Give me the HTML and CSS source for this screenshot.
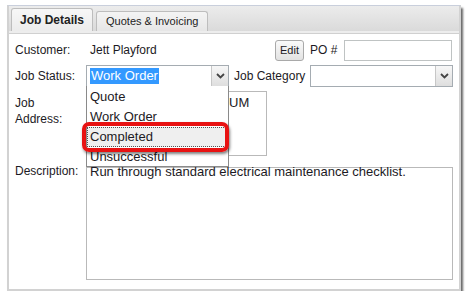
FILE: index.html
```html
<!DOCTYPE html>
<html>
<head>
<meta charset="utf-8">
<link rel="stylesheet" href="styles.css">
</head>
<body>
<div class="panel">
  <div class="tabs">
    <div class="tab active">Job Details</div>
    <div class="tab">Quotes &amp; Invoicing</div>
  </div>
  <div class="content">
    <div class="row row-customer">
      <div class="label">Customer:</div>
      <div class="value">Jett Playford</div>
      <div class="spacer"></div>
      <div class="btn">Edit</div>
      <div class="po-label">PO #</div>
      <div class="input po-input"></div>
    </div>
    <div class="row row-status">
      <div class="label">Job Status:</div>
      <div class="select status-select">
        <div class="select-text"><span class="sel-hl">Work Order</span></div>
        <div class="select-arrow"><svg width="9" height="6" viewBox="0 0 9 6"><path d="M1 1 L4.5 4.5 L8 1" fill="none" stroke="#444" stroke-width="1.8"/></svg></div>
      </div>
      <div class="cat-label">Job Category</div>
      <div class="select cat-select">
        <div class="select-text"></div>
        <div class="select-arrow"><svg width="9" height="6" viewBox="0 0 9 6"><path d="M1 1 L4.5 4.5 L8 1" fill="none" stroke="#444" stroke-width="1.8"/></svg></div>
      </div>
    </div>
    <div class="row row-address">
      <div class="label">Job<br>Address:</div>
      <div class="textarea address-area">UM</div>
    </div>
    <div class="row row-desc">
      <div class="label">Description:</div>
      <div class="textarea desc-area"><span class="desc-text">Run through standard electrical maintenance checklist.</span></div>
    </div>
  </div>
  <div class="dropdown">
    <div class="opt">Quote</div>
    <div class="opt">Work Order</div>
    <div class="opt opt-focus">Completed</div>
    <div class="opt">Unsuccessful</div>
  </div>
  <div class="callout"></div>
</div>
</body>
</html>
```

FILE: styles.css
```css
html, body {
  margin: 0;
  padding: 0;
  background: #ffffff;
}
body {
  font-family: "Liberation Sans", Arial, sans-serif;
  font-size: 12px;
  color: #1c1a24;
}
.panel {
  position: relative;
  margin: 5px 0 0 7px;
  width: 450px;
  height: 283px;
  border: 2px solid #d2d2d2;
  border-top: 1px solid #c9cfdc;
  background: #ffffff;
  box-shadow: 2px 3px 2px rgba(0, 0, 0, 0.6);
}
.tabs {
  height: 23px;
  padding: 2px 0 0 2px;
  display: flex;
  align-items: flex-end;
  gap: 3px;
  background: linear-gradient(#ececec, #dadada);
  border-bottom: 2px solid #ededed;
  box-shadow: 0 1px 0 #d0d0d0;
}
.tab {
  font-size: 11px;
  height: 20px;
  line-height: 19px;
  padding: 0 9px;
  border: 1px solid #bdbdbd;
  border-bottom: none;
  border-radius: 3px 3px 0 0;
  background: linear-gradient(#f4f4f4, #e6e6e6);
  color: #222;
  box-sizing: border-box;
}
.tab.active {
  height: 23px;
  line-height: 22px;
  font-weight: bold;
  font-size: 12px;
  padding: 0 8px;
  background: linear-gradient(#f7f7f7, #ececec);
}
.content {
  padding: 6px 0 0 6px;
  display: flex;
  flex-direction: column;
}
.row {
  display: flex;
  align-items: center;
}
.label {
  width: 71px;
  flex: none;
}
.row-customer {
  height: 22px;
}
.value {
  padding-left: 4px;
}
.spacer {
  flex: 1;
}
.btn {
  width: 29px;
  height: 21px;
  box-sizing: border-box;
  border: 1px solid #a9a9a9;
  border-radius: 3px;
  background: linear-gradient(#fafafa, #e2e2e2);
  font-size: 11px;
  line-height: 19px;
  text-align: center;
}
.po-label {
  margin-left: 6px;
  width: 34px;
}
.input {
  height: 21px;
  box-sizing: border-box;
  border: 1px solid #bfc3c3;
  background: #fff;
}
.po-input {
  width: 108px;
  margin-right: 7px;
}
.row-status {
  margin-top: 4px;
  height: 22px;
}
.select {
  display: flex;
  height: 22px;
  box-sizing: border-box;
  border: 1px solid #a5acb2;
  background: #fff;
}
.status-select {
  width: 143px;
}
.cat-select {
  width: 143px;
  margin-left: auto;
  margin-right: 6px;
}
.select-text {
  flex: 1;
  padding: 2px 0 0 3px;
}
.sel-hl {
  display: inline-block;
  background: #3399ff;
  color: #fff;
  font-size: 13px;
  line-height: 16px;
  padding: 0 1px;
}
.select-arrow {
  width: 16px;
  border-left: 1px solid #c7c7c7;
  background: linear-gradient(#f7f7f7, #dedede);
  display: flex;
  align-items: center;
  justify-content: center;
}
.cat-label {
  margin-left: 5px;
}
.row-address {
  margin-top: 4px;
  align-items: flex-start;
}
.row-address .label {
  padding-top: 4px;
  line-height: 16px;
}
.textarea {
  box-sizing: border-box;
  border: 1px solid #b9b9b9;
  background: #fff;
  padding: 5px 3px;
  font-size: 13px;
}
.address-area {
  width: 181px;
  height: 65px;
  padding-left: 142px;
  padding-top: 3px;
}
.row-desc {
  margin-top: 11px;
  align-items: flex-start;
}
.row-desc .label {
  margin-top: -3px;
  line-height: 15px;
}
.desc-area {
  width: 367px;
  height: 113px;
  padding: 0 3px;
  line-height: 15px;
}
.desc-text {
  display: block;
  margin-top: -4px;
}
.dropdown {
  position: absolute;
  left: 77px;
  top: 80px;
  width: 143px;
  height: 81px;
  box-sizing: border-box;
  border: 1px solid #8a8a8a;
  border-top: none;
  background: #fff;
  padding-top: 1px;
  font-size: 13px;
}
.opt {
  height: 20px;
  line-height: 20px;
  padding-left: 3px;
  box-sizing: border-box;
}
.opt-focus {
  background: #efefef;
  border: 1px dotted #555;
  line-height: 18px;
  padding-left: 2px;
}
.callout {
  position: absolute;
  left: 73px;
  top: 116px;
  width: 147px;
  height: 30px;
  box-sizing: border-box;
  border: 4px solid #e81212;
  border-radius: 7px;
  box-shadow: 1px 2px 3px rgba(0, 0, 0, 0.5);
}
```
